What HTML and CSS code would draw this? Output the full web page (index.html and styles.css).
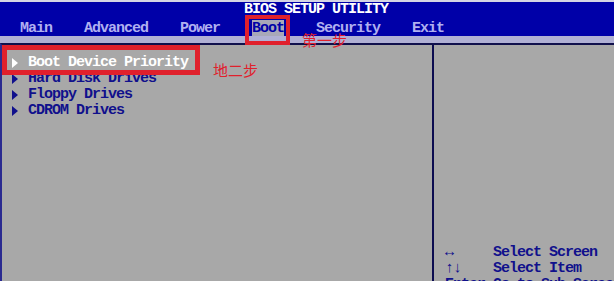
FILE: index.html
```html
<!DOCTYPE html>
<html>
<head>
  <title>BIOS SETUP UTILITY - Boot</title>
  <link rel="stylesheet" href="styles.css">
</head>
<body>

  <div class="screen">
    <div class="topline"></div>
    <div class="header">
      <div class="title">BIOS SETUP UTILITY</div>
      <div class="menu">
        <span>Main</span>
        <span>Advanced</span>
        <span>Power</span>
        <span class="active">Boot</span>
        <span>Security</span>
        <span>Exit</span>
      </div>
    </div>
    <div class="band"></div>

    <div class="panes">
      <div class="left">
        <div class="item selected"><i class="arrow"></i>Boot Device Priority</div>
        <div class="item"><i class="arrow"></i>Hard Disk Drives</div>
        <div class="item"><i class="arrow"></i>Floppy Drives</div>
        <div class="item"><i class="arrow"></i>CDROM Drives</div>
      </div>
      <div class="right">
        <div class="help"><span class="key">&#8596;</span>Select Screen</div>
        <div class="help"><span class="key">&#8593;&#8595;</span>Select Item</div>
        <div class="help"><span class="key">Enter</span>Go to Sub Screen</div>
      </div>
    </div>

    <!-- annotations -->
    <div class="mark mark-boot"></div>
    <div class="note note-one">第一步</div>
    <div class="mark mark-item"></div>
    <div class="note note-two">地二步</div>
  </div>

</body>
</html>
```

FILE: styles.css
```css
body {
  margin: 0;
  background: #a8a8a8;
  overflow: hidden;
}
.screen {
  position: relative;
  width: 614px;
  height: 281px;
  overflow: hidden;
  font-family: "Liberation Mono", "DejaVu Sans Mono", monospace;
  font-size: 15px;
  letter-spacing: -1px;
  font-weight: bold;
  display: flex;
  flex-direction: column;
}
.topline {
  flex-shrink: 0;
  height: 2px;
  background: #d4d4e4;
}
.header {
  flex-shrink: 0;
  height: 34px;
  background: #0000a8;
  overflow: hidden;
}
.title {
  color: #ffffff;
  padding-left: 244px;
  height: 18px;
  line-height: 16px;
  margin-top: 0;
}
.menu {
  display: flex;
  gap: 32px;
  padding-left: 20px;
  line-height: 16px;
  color: #b0b0f0;
}
.menu span {
  padding-top: 1px;
}
.menu .active {
  background: #a8a8b8;
  color: #0000a8;
}
.band {
  flex-shrink: 0;
  height: 7px;
  background: #b0b0d4;
}
.panes {
  flex: 1;
  min-height: 0;
  display: flex;
  border-top: 2px solid #10104c;
  border-left: 2px solid #2a2a90;
}
.left {
  flex-shrink: 0;
  width: 430px;
  padding-top: 10px;
  border-right: 2px solid #0c0c50;
}
.item {
  line-height: 16px;
  padding-left: 10px;
  color: #10108c;
  display: flex;
  align-items: center;
}
.item.selected {
  color: #ffffff;
}
.arrow {
  width: 0;
  height: 0;
  border-left: 6px solid currentColor;
  border-top: 5px solid transparent;
  border-bottom: 5px solid transparent;
  margin-right: 10px;
}
.right {
  flex: 1;
  min-width: 0;
  padding-top: 200px;
  padding-left: 11px;
}
.help {
  line-height: 16px;
  color: #10108c;
  display: flex;
  white-space: nowrap;
}
.key {
  flex-shrink: 0;
  width: 48px;
}
.mark {
  position: absolute;
  border: 4px solid #e0202c;
}
.mark-boot {
  left: 245px;
  top: 15px;
  width: 37px;
  height: 22px;
}
.mark-item {
  left: 2px;
  top: 45px;
  width: 188px;
  height: 20px;
  border-width: 5px;
}
.note {
  position: absolute;
  color: #e0202c;
  font-family: "Noto Sans CJK SC", sans-serif;
  font-size: 15px;
  font-weight: normal;
  letter-spacing: 0;
  line-height: 15px;
}
.note-one {
  left: 302px;
  top: 32px;
}
.note-two {
  left: 213px;
  top: 62px;
}
```
